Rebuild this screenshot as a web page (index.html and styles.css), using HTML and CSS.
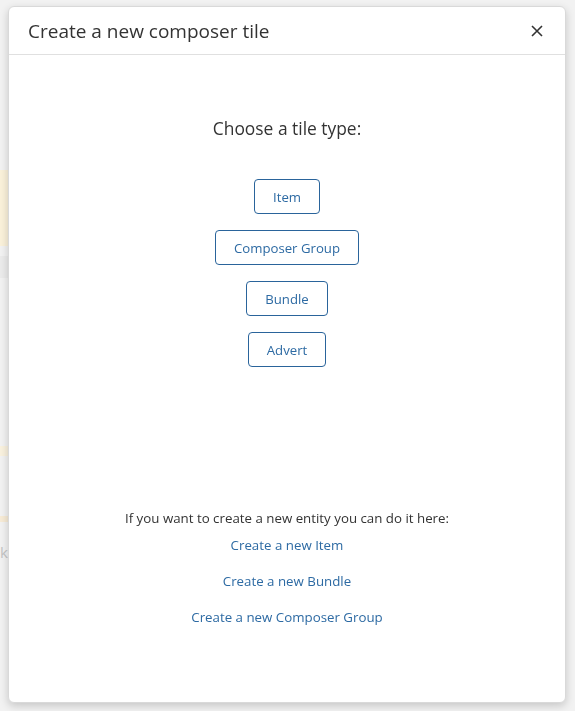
FILE: index.html
```html
<!DOCTYPE html>
<html lang="en">

<head>
    <meta charset="UTF-8">
    <meta name="viewport" content="width=device-width, initial-scale=1.0">
    <title>Create a new composer tile</title>
    <link rel="stylesheet" href="styles.css">
</head>

<body>
    <!-- page behind the dialog -->
    <div class="page">
        <div class="bg-card bg-yellow"></div>
        <div class="bg-strip"></div>
        <div class="bg-card bg-yellow-low"></div>
        <div class="bg-line"></div>
        <div class="bg-text">k</div>
    </div>

    <div class="modal">
        <div class="modal-header">
            <h4 class="modal-title">Create a new composer tile</h4>
            <button class="close" type="button" aria-label="Close">
                <svg width="12" height="12" viewBox="0 0 12 12">
                    <path d="M1 1 L11 11 M11 1 L1 11" stroke="#333" stroke-width="1.6" fill="none" />
                </svg>
            </button>
        </div>
        <div class="modal-body">
            <h3 class="choose">Choose a tile type:</h3>
            <div class="tile-types">
                <button class="btn-tile" type="button">Item</button>
                <button class="btn-tile" type="button">Composer Group</button>
                <button class="btn-tile" type="button">Bundle</button>
                <button class="btn-tile" type="button">Advert</button>
            </div>
            <div class="entities">
                <p class="info">If you want to create a new entity you can do it here:</p>
                <a href="#" class="entity-link">Create a new Item</a>
                <a href="#" class="entity-link">Create a new Bundle</a>
                <a href="#" class="entity-link">Create a new Composer Group</a>
            </div>
        </div>
    </div>
</body>

</html>
```

FILE: styles.css
```css
body {
    font-family: "Open Sans", "Noto Sans", Arial, sans-serif;
    background-color: #f2f2f2;
    margin: 0;
    padding: 0;
    color: #333;
}

.page {
    padding-top: 170px;
}

.bg-card {
    width: 120px;
    background-color: #faf1da;
}

.bg-yellow {
    height: 76px;
}

.bg-strip {
    width: 120px;
    height: 22px;
    margin-top: 10px;
    background-color: #ebebeb;
}

.bg-yellow-low {
    height: 10px;
    margin-top: 168px;
    background-color: #f9f1de;
}

.bg-line {
    width: 120px;
    height: 6px;
    margin-top: 60px;
    background-color: #f7ebd6;
}

.bg-text {
    margin-top: 20px;
    font-size: 15px;
    color: #c4c4c4;
}

.modal {
    position: fixed;
    top: 6px;
    left: 8px;
    width: 558px;
    height: 697px;
    box-sizing: border-box;
    background-color: #fff;
    border: 1px solid #d9d9d9;
    border-radius: 6px;
    box-shadow: 0 3px 9px rgba(0, 0, 0, 0.18);
    display: flex;
    flex-direction: column;
}

.modal-header {
    height: 48px;
    box-sizing: border-box;
    padding: 0 20px 0 19px;
    border-bottom: 1px solid #e0e0e0;
    display: flex;
    align-items: center;
    justify-content: space-between;
}

.modal-title {
    margin: 0;
    font-size: 19px;
    font-weight: normal;
    color: #333;
}

.close {
    background: none;
    border: none;
    padding: 0;
    margin-right: 2px;
    display: flex;
    cursor: pointer;
}

.modal-body {
    display: flex;
    flex-direction: column;
    align-items: center;
    padding-top: 60px;
}

.choose {
    margin: 0;
    font-size: 17.4px;
    line-height: 26px;
    font-weight: normal;
    color: #333;
}

.tile-types {
    display: flex;
    flex-direction: column;
    align-items: center;
    gap: 16px;
    margin-top: 38px;
}

.btn-tile {
    height: 35px;
    padding: 0 18px;
    font-family: inherit;
    font-size: 13.2px;
    color: #2d6aa3;
    background-color: #fff;
    border: 1px solid #2a649b;
    border-radius: 4px;
    cursor: pointer;
}

.entities {
    display: flex;
    flex-direction: column;
    align-items: center;
    gap: 16px;
    margin-top: 141px;
}

.info {
    margin: 0 0 -9px;
    font-size: 13.3px;
    line-height: 20px;
    color: #333;
}

.entity-link {
    font-size: 13.3px;
    line-height: 20px;
    color: #2d6aa3;
    text-decoration: none;
}
```
